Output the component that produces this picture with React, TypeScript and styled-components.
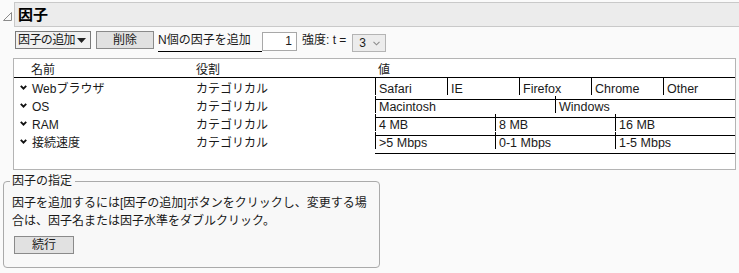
import React from "react";
import styled, { createGlobalStyle } from "styled-components";

const GlobalStyle = createGlobalStyle`
  body {
    margin: 0;
    background: #fafafa;
    font-family: "Liberation Sans", "Noto Sans CJK JP", sans-serif;
    font-size: 12px;
    color: #1a1a1a;
  }
`;

interface Factor {
  name: string;
  role: string;
  levels: string[];
}

const factors: Factor[] = [
  { name: "Webブラウザ", role: "カテゴリカル", levels: ["Safari", "IE", "Firefox", "Chrome", "Other"] },
  { name: "OS", role: "カテゴリカル", levels: ["Macintosh", "Windows"] },
  { name: "RAM", role: "カテゴリカル", levels: ["4 MB", "8 MB", "16 MB"] },
  { name: "接続速度", role: "カテゴリカル", levels: [">5 Mbps", "0-1 Mbps", "1-5 Mbps"] },
];

export default function App() {
  return (
    <>
      <GlobalStyle />
      <Page>
        <TitleRow>
          <Disclosure width="9" height="9" viewBox="0 0 9 9">
            <path d="M0.5 8.5 L8.5 0.5 L8.5 8.5 Z" fill="none" stroke="#8a8a8a" strokeWidth="1" />
          </Disclosure>
          <TitleBar>因子</TitleBar>
        </TitleRow>

        <Toolbar>
          <Dropdown>
            <DropdownText>因子の追加</DropdownText>
            <svg width="9" height="5" viewBox="0 0 9 5">
              <path d="M0 0 L9 0 L4.5 5 Z" fill="#222" />
            </svg>
          </Dropdown>
          <Button $width={58} $gap={5}>削除</Button>
          <NLabel>N個の因子を追加</NLabel>
          <NumberBox>1</NumberBox>
          <StrengthLabel>強度: t =</StrengthLabel>
          <Select>
            3
            <svg width="7" height="5" viewBox="0 0 7 5">
              <path d="M0.5 0.8 L3.5 3.8 L6.5 0.8" fill="none" stroke="#8c8c8c" strokeWidth="1.1" />
            </svg>
          </Select>
        </Toolbar>

        <FactorTable>
          <HeaderRow>
            <NameHead>名前</NameHead>
            <RoleCell>役割</RoleCell>
            <ValueHead>値</ValueHead>
          </HeaderRow>
          {factors.map((f) => (
            <Row key={f.name}>
              <NameCell>
                <Chevron width="7" height="5" viewBox="0 0 7 5">
                  <path d="M0.8 0.8 L3.5 3.6 L6.2 0.8" fill="none" stroke="#111" strokeWidth="1.9" />
                </Chevron>
                {f.name}
              </NameCell>
              <RoleCell>{f.role}</RoleCell>
              <Levels $count={f.levels.length}>
                {f.levels.map((l) => (
                  <Level key={l}>{l}</Level>
                ))}
              </Levels>
            </Row>
          ))}
        </FactorTable>

        <GroupBox>
          <Legend>因子の指定</Legend>
          <Hint>
            因子を追加するには[因子の追加]ボタンをクリックし、変更する場
            <br />
            合は、因子名または因子水準をダブルクリック。
          </Hint>
          <Button $width={60} $gap={1}>続行</Button>
        </GroupBox>
      </Page>
    </>
  );
}

const Page = styled.div`
  width: 739px;
  height: 273px;
  overflow: hidden;
`;

const TitleRow = styled.div`
  display: flex;
  padding: 2px 0 0 3px;
`;

const Disclosure = styled.svg`
  margin: 10px 2px 0 0;
  flex: none;
`;

const TitleBar = styled.div`
  flex: 1;
  height: 23px;
  background: #ececec;
  border: 1px solid #c9c9c9;
  border-right: none;
  padding-left: 3px;
  font-size: 15px;
  font-weight: bold;
  line-height: 23px;
  color: #000;
`;

const Toolbar = styled.div`
  display: flex;
  align-items: flex-start;
  height: 22px;
  margin-top: 4px;
  padding-left: 15px;
`;

const Dropdown = styled.div`
  box-sizing: border-box;
  display: flex;
  align-items: center;
  justify-content: space-between;
  width: 76px;
  height: 18px;
  padding: 0 4px 0 2px;
  background: #f0f0f0;
  border: 1px solid #7a7a7a;
  line-height: 16px;
  white-space: nowrap;
`;

const DropdownText = styled.span`
  letter-spacing: -0.6px;
`;

const Button = styled.div<{ $width: number; $gap: number }>`
  box-sizing: border-box;
  width: ${(p) => p.$width}px;
  height: 18px;
  margin-left: ${(p) => p.$gap}px;
  background: #e1e1e1;
  border: 1px solid #8a8a8a;
  text-align: center;
  line-height: 16px;
`;

const NLabel = styled.div`
  box-sizing: border-box;
  width: 104px;
  height: 21px;
  margin-left: 4px;
  border-bottom: 1px solid #000;
  line-height: 19px;
  white-space: nowrap;
`;

const NumberBox = styled.div`
  box-sizing: border-box;
  width: 35px;
  height: 19px;
  margin-top: 1px;
  padding-right: 4px;
  background: #fff;
  border: 1px solid #a8a8a8;
  text-align: right;
  line-height: 17px;
`;

const StrengthLabel = styled.div`
  margin-left: 5px;
  line-height: 19px;
  white-space: nowrap;
`;

const Select = styled.div`
  box-sizing: border-box;
  display: flex;
  align-items: center;
  justify-content: space-between;
  width: 34px;
  height: 18px;
  margin: 3px 0 0 6px;
  padding: 0 5px 0 6px;
  background: #ececec;
  border: 1px solid #b4b4b4;
  line-height: 16px;
`;

const FactorTable = styled.div`
  width: 723px;
  height: 112px;
  box-sizing: border-box;
  margin: 5px 0 0 13px;
  background: #fff;
  border: 1px solid #b4b4b4;
`;

const columns = `
  display: grid;
  grid-template-columns: 182px 179px 360px;
`;

const HeaderRow = styled.div`
  ${columns}
  height: 18px;
  border-bottom: 1px solid #000;
  line-height: 22px;
`;

const NameHead = styled.div`
  padding-left: 17px;
`;

const ValueHead = styled.div`
  padding-left: 3px;
`;

const Row = styled.div`
  ${columns}
  height: 18px;
  line-height: 22px;
`;

const NameCell = styled.div`
  display: flex;
  align-items: flex-start;
  padding-left: 6px;
  white-space: nowrap;
`;

const Chevron = styled.svg`
  margin: 7px 5px 0 0;
  flex: none;
`;

const RoleCell = styled.div`
  white-space: nowrap;
`;

const Levels = styled.div<{ $count: number }>`
  display: grid;
  grid-template-columns: repeat(${(p) => p.$count}, 1fr);
  border-bottom: 1px solid #000;
`;

const Level = styled.div`
  box-sizing: border-box;
  border-left: 1px solid #000;
  padding-left: 3px;
  font-size: 12.5px;
  line-height: 22px;
  height: 17px;
  white-space: nowrap;
  overflow: hidden;
`;

const GroupBox = styled.fieldset`
  box-sizing: border-box;
  width: 377px;
  height: 95px;
  margin: 3px 0 0 3px;
  padding: 0 8px 0 9px;
  background: #f8f8f8;
  border: 1px solid #aaa;
  border-radius: 4px;
`;

const Legend = styled.legend`
  margin-left: -3px;
  padding: 0 3px 0 2px;
  line-height: 16px;
`;

const Hint = styled.div`
  margin: 5px 0 6px -1px;
  line-height: 18px;
  white-space: nowrap;
`;
